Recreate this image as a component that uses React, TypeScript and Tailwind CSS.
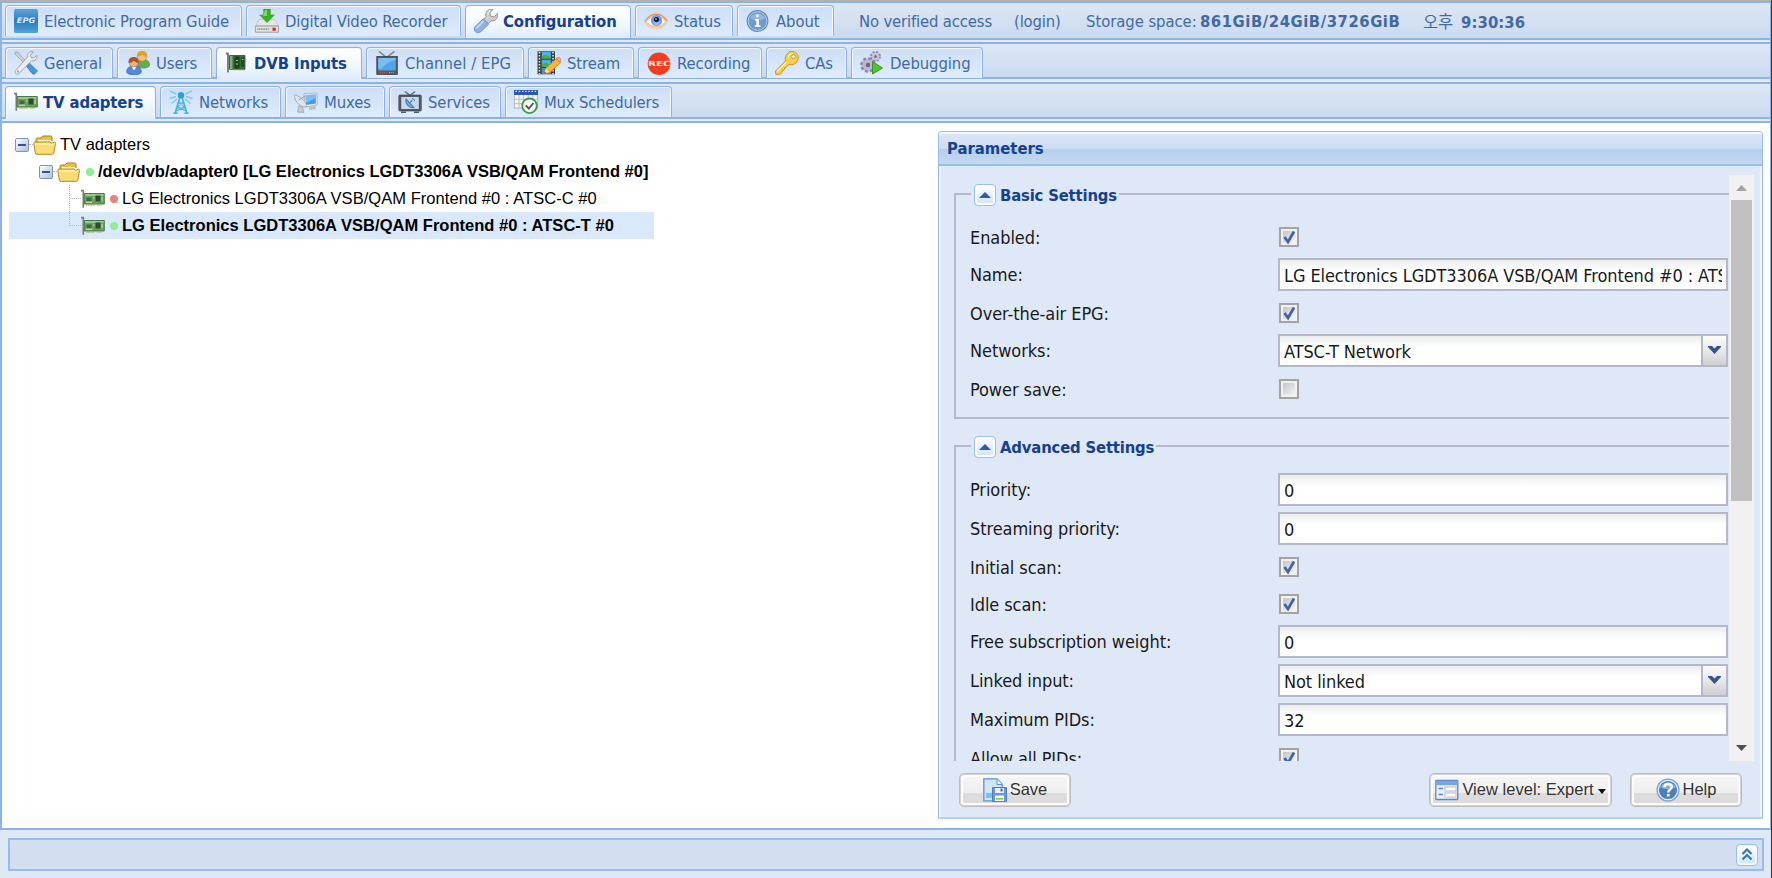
import type { ReactNode } from "react";

/* ---------- icons ---------- */

function Svg({ children, className = "size-6" }: { children: ReactNode; className?: string }) {
  return (
    <svg viewBox="0 0 24 24" className={`shrink-0 ${className}`} fill="none">
      {children}
    </svg>
  );
}

const EpgIcon = () => (
  <Svg>
    <defs>
      <linearGradient id="epg" x1="0" y1="0" x2="0" y2="1">
        <stop offset="0" stopColor="#5aa5da" />
        <stop offset="0.5" stopColor="#2b7cbf" />
        <stop offset="0.75" stopColor="#3a8cca" />
        <stop offset="1" stopColor="#5ba3d6" />
      </linearGradient>
    </defs>
    <rect width="24" height="24" rx="1.5" fill="url(#epg)" />
    <text x="12" y="13.6" textAnchor="middle" textLength="18.5" lengthAdjust="spacingAndGlyphs" fontFamily="DejaVu Sans, sans-serif" fontStyle="italic" fontWeight="700" fontSize="7.5" fill="#d9eaf8">
      EPG
    </text>
  </Svg>
);

const DvrIcon = () => (
  <Svg>
    <path d="M4 10.5h16l3.2 6.5H.8z" fill="#e6e6e6" stroke="#b4b4b4" strokeWidth=".6" />
    <path d="M.4 17h23.2v6.2H.4z" fill="#e2e2e2" stroke="#8d8d8d" strokeWidth=".8" />
    <path d="M2.5 20.2h12" stroke="#8b8b8b" strokeWidth="1.8" strokeDasharray="1 .7" />
    <rect x="17.5" y="18.7" width="3.2" height="3" fill="#f01818" />
    <path d="M8.700 0h6.600v6h4L12 13.600 4.700 6h4z" fill="#35b51c" stroke="#2a9a15" strokeWidth=".6" />
    <path d="M10 1h2v6H8z" fill="#7ddb5c" />
  </Svg>
);

const WrenchIcon = () => (
  <Svg>
    <path d="M23.700 4.200 20.200 8l-3.500-.9-.9-3.400L19.200.4c-3.500-1-6.800 1-7.400 4.300-.1 1.200 0 2 .3 2.800L9.800 9.900l4.500 4.600 2.800-2.700c4 .9 7.600-3 6.600-7.600z" fill="#cfcfcf" stroke="#8b8b8b" strokeWidth=".9" />
    <path d="M13.600 5.500c0-2 1-3.300 2.500-4" stroke="#f0f0f0" strokeWidth="1" />
    <path d="m9.200 10 5.300 5.300-7.500 7.200c-4 3.500-9-.8-5.700-5.200z" fill="#8fb0e4" stroke="#6a8fd0" strokeWidth=".9" />
    <path d="m9 12.500-6 6.200" stroke="#c0d4f3" strokeWidth="2" strokeLinecap="round" />
  </Svg>
);

const EyeIcon = () => (
  <Svg>
    <path d="M.3 12.500C3 5 9 3.200 12.500 3.200S22 6 23.700 12c-1.500 6-7 8.300-11.700 8.300S2 18 .3 12.500Z" fill="#f4cfae" />
    <path d="M.8 12.500C5 6.500 9 5.300 12.300 5.300S20 7.500 23.300 12" stroke="#d08c63" strokeWidth="1.100" />
    <path d="M2.500 12.800C6 8.300 9 7 12.300 7s6.500 1.800 9.300 5.200c-2.600 4-6 5.300-9.400 5.300-4 0-7.400-1.500-9.700-4.700Z" fill="#fff" stroke="#e0a983" strokeWidth=".6" />
    <circle cx="12.500" cy="11.500" r="5.600" fill="#6c9fe4" />
    <circle cx="12.500" cy="13.500" r="3" fill="#94bef2" />
    <circle cx="12.500" cy="10.600" r="2.600" fill="#14203c" />
    <circle cx="12" cy="10" r=".8" fill="#fff" />
  </Svg>
);

const InfoIcon = () => (
  <Svg>
    <circle cx="11.500" cy="12" r="10.900" fill="#5c86bd" />
    <circle cx="11.500" cy="12" r="9.400" fill="#6f9bcf" stroke="#b9d0ea" strokeWidth="1" />
    <path d="M4 9c3-6 12-6 15 0-4 3-11 3-15 0Z" fill="#93b6de" />
    <circle cx="11.500" cy="6.800" r="1.600" fill="#f2f7fd" />
    <path d="M9 10h4v6.300h1.500V18H8.800v-1.700h1.500v-4.600H9z" fill="#f2f7fd" />
  </Svg>
);

const ToolsIcon = () => (
  <Svg>
    <path d="m1 1.500 2.500-.8L7 5l7.500 8-1.800 1.700L5 6.800.8 3z" fill="#cfd3d6" stroke="#8e9499" strokeWidth=".7" />
    <path d="m12.500 15.200 3-3 8 7.800-3.300 3.300c-1 0-1.500-.3-2.200-1z" fill="#4c93d8" stroke="#2d6fb2" strokeWidth=".7" />
    <path d="M22.800 4.400 19.500 7l-2.300-.6-.6-2.300L19.300.8c-3.300-.9-6.500 1.700-5.800 5.100L1.500 19.500c-1.700 2.700 1.300 5 3.500 3L17.500 9.800c3.500.6 6.200-2.200 5.300-5.400Z" fill="#e9ecee" stroke="#8e9499" strokeWidth=".8" />
    <circle cx="4" cy="20.500" r="1" fill="#8e9499" />
  </Svg>
);

const UsersIcon = () => (
  <Svg>
    <path d="M11.500 13c0-3 2-4.500 5-4.500 4.500 0 7 2 7 5.500 0 2-3 3-6 3s-6-1-6-4Z" fill="#63ad4e" stroke="#3f8a2f" strokeWidth=".7" />
    <circle cx="16" cy="5.500" r="4.700" fill="#f2c084" stroke="#c98a33" strokeWidth=".6" />
    <path d="M11 5.500C10.500 1.500 13 0 16 0c3.500 0 5.700 2 5.200 5.800-2.500 0-3.500-1-5-2.300C15 5 13 5.500 11 5.500Z" fill="#e5a027" />
    <path d="M.7 20.500c0-3.500 3-5.500 7.300-5.500 4.500 0 7.300 2 7.300 5.500 0 2.300-3 3.200-7.300 3.200s-7.300-.9-7.300-3.200Z" fill="#5289dc" stroke="#2e63b7" strokeWidth=".7" />
    <path d="m5.500 15.500 2.500 4 2.500-4z" fill="#fff" />
    <circle cx="7.700" cy="11.500" r="4.600" fill="#eeb27c" stroke="#a9602a" strokeWidth=".5" />
    <path d="M2.700 12C2 8 4.500 6 7.700 6c3.500 0 5.600 2 5 6-2.500-.3-3.500-1-5-2.300-1.500 1.500-3 2.200-5 2.300Z" fill="#a6542a" />
  </Svg>
);

const DvbCardIcon = () => (
  <Svg>
    <path d="M3 2.500v19M.8 2.500h3" stroke="#77837a" strokeWidth="2" />
    <path d="M4.500 4.500H20v13.800H4.500z" fill="#35713a" stroke="#28512b" strokeWidth=".8" />
    <path d="M5 5h2.500v13H5z" fill="#86a886" />
    <rect x="9.500" y="5.500" width="5" height="12" fill="#1c4322" />
    <rect x="16" y="6.500" width="3" height="9" fill="#1f4a25" />
    <path d="M11 9.500h2M11 13h2M17 8.500h1.500" stroke="#a9cf8c" strokeWidth="1.200" />
    <path d="M8 19h11" stroke="#c5b35c" strokeWidth="1.200" strokeDasharray="1 .6" />
  </Svg>
);

const TvIcon = () => (
  <Svg>
    <path d="m4 .5 7.500 6L19.500.3" stroke="#7b868e" strokeWidth="1.500" />
    <rect x="1.800" y="5.500" width="20.500" height="18" fill="#555b61" stroke="#2f3439" strokeWidth=".7" />
    <rect x="3.300" y="7" width="17.500" height="12.500" fill="#4da6ec" />
    <path d="M3.300 7h17.500v2c-6 1-11 4-14 8.500H3.300z" fill="#78bff5" />
    <path d="M5 21.500h7" stroke="#d05050" strokeWidth="1.300" strokeDasharray="1.200 1" />
    <path d="M14 21.500h5" stroke="#a8afb4" strokeWidth="1.200" strokeDasharray="1.200 1" />
  </Svg>
);

const StreamIcon = () => (
  <Svg>
    <rect x=".5" y=".3" width="17.500" height="23" fill="#3a4042" />
    <path d="M2.500 1v22M16 1v22" stroke="#dfe5e7" strokeWidth="1.600" strokeDasharray="1.600 1.400" />
    <rect x="4.800" y="1" width="9" height="6.500" fill="#49b2ea" />
    <rect x="4.800" y="8.800" width="9" height="7" fill="#49b2ea" />
    <rect x="4.800" y="17" width="9" height="6" fill="#4a96c2" />
    <path d="M4.800 5.500 9 3.500l4.800 3v1h-9zM4.800 13.500 9 11.500l4.800 3v1.300h-9z" fill="#4fae3a" />
    <path d="M7 22.800 9 17 19.500 7.500l4 4.300L13 21.500z" fill="#f5b63d" stroke="#c17f17" strokeWidth=".8" />
    <path d="m19.500 7.500 1.300-1.100c1.500-.8 4.300 2 3 4l-.8.9z" fill="#f0a59b" stroke="#b9665c" strokeWidth=".6" />
    <path d="m7 22.800 2-5.300 3.500 3.600z" fill="#f6dcae" />
    <path d="m7 22.800.8-2 1.300 1.200z" fill="#333" />
  </Svg>
);

const RecIcon = () => (
  <Svg>
    <circle cx="12" cy="12.700" r="11.300" fill="#f23c20" />
    <text x="12.300" y="15.200" textAnchor="middle" textLength="22.500" lengthAdjust="spacingAndGlyphs" fontFamily="DejaVu Sans, sans-serif" fontWeight="700" fontSize="7" fill="#ffe9e4">
      REC
    </text>
  </Svg>
);

const KeyIcon = () => (
  <Svg>
    <path d="M11 5c1.500-3.500 4-5 7-4.500 4 .7 6 4.500 5 8-1 4-5 6-9 4.800L11 16.500l-1.500.3-.3 2.200-2 .3-.3 2.200-2 1.800-4 .2-.4-3.500L10.500 10C10 8 10.300 6.500 11 5Z" fill="#f8d04e" stroke="#c9921a" strokeWidth="1" />
    <path d="M2 20.500 11.500 11" stroke="#fdf0ac" strokeWidth="1.300" />
    <path d="M13 6c1-2.500 3-3.500 5-3" stroke="#fdf0ac" strokeWidth="1.400" />
    <circle cx="18.500" cy="5.500" r="2.100" fill="#deecfd" stroke="#c9921a" strokeWidth=".9" />
  </Svg>
);

const DebugIcon = () => (
  <Svg>
    <circle cx="15.500" cy="5.500" r="4.600" fill="#c6c3d8" stroke="#8f8ba8" strokeWidth="1.800" strokeDasharray="2.200 1.410" />
    <circle cx="15.500" cy="5.500" r="3.600" fill="#c6c3d8" />
    <circle cx="15.500" cy="5.500" r="1.500" fill="#78749a" />
    <circle cx="8" cy="14" r="6.600" fill="#bcb8d0" stroke="#8a86a3" strokeWidth="2.400" strokeDasharray="3 2.180" />
    <circle cx="8" cy="14" r="5.300" fill="#bcb8d0" />
    <circle cx="8" cy="14" r="2.300" fill="#6b6788" />
    <path d="M12.500 10.500 22.500 17l-10 6z" fill="#4fc42d" stroke="#2f8f17" strokeWidth=".9" />
  </Svg>
);

const AdapterIcon = () => (
  <Svg>
    <path d="M0 3.700h2.300v17" stroke="#7a827c" strokeWidth="1.700" />
    <path d="M3.300 6.500h20v10.500h-20z" fill="#69a262" stroke="#3c7440" strokeWidth=".9" />
    <path d="M4 7h18.500v2H4z" fill="#9cc48b" />
    <rect x="5.500" y="10.500" width="5" height="3.500" fill="#3c6b3f" />
    <rect x="14.500" y="8.500" width="5" height="6" fill="#2c4a2f" />
    <path d="M12 11h1.500M21 10v4M5 15.300h6" stroke="#d6e6b0" strokeWidth="1" />
    <path d="M5 18h9M16 18h5" stroke="#b7ab62" strokeWidth="1.700" strokeDasharray="1.200 .5" />
  </Svg>
);

const NetworksIcon = () => (
  <Svg>
    <g stroke="#45b3e8" strokeWidth="1.700">
      <path d="M11 7 6 23.500M13 7l5 16.500" />
      <path d="m9.500 12 6 5-8.500 4M14.500 12l-6 5 8.500 4M9 13h6M8 18h8" strokeWidth="1.200" />
      <path d="M4.500 23.200h4M15.500 23.200h4" strokeWidth="1.800" />
    </g>
    <circle cx="12" cy="5.300" r="3.200" fill="#2fa0dc" />
    <g stroke="#7bcbf1" strokeWidth="1.500">
      <path d="M7.500 4 1 1M7 6.500.5 8.500M8 9l-5.500 4.500M16.500 4 23 1M17 6.500l6.500 2M16 9l5.500 4.500" />
    </g>
  </Svg>
);

const MuxesIcon = () => (
  <Svg>
    <path d="M10 3.500 23 3v12l-12 2z" fill="#e9edf1" stroke="#a4adb5" strokeWidth=".8" />
    <path d="M11.500 5 21.800 4.500v9L12 15z" fill="#3f9ae9" />
    <path d="M12 5h9.800v3L12 13z" fill="#7bbdf4" />
    <path d="m15 17 6-1 1 3-7 1z" fill="#b7bfc6" />
    <path d="M.5 5c1.500-1.500 13 7 12 11.500C8 18.500 0 12 .5 5Z" fill="#e3e6e9" stroke="#9aa1a8" strokeWidth=".8" />
    <path d="m5 10 6-4" stroke="#8f979e" strokeWidth="1" />
    <path d="M5 15.500 3.500 22l6.500.5-1.500-5.500z" fill="#c7ccd1" stroke="#9aa1a8" strokeWidth=".7" />
  </Svg>
);

const ServicesIcon = () => (
  <Svg>
    <path d="m7 1.500 5 4 5-4" stroke="#5e6a74" strokeWidth="1.500" />
    <rect x=".8" y="5" width="22.500" height="16" rx="1" fill="#515b64" stroke="#363e45" strokeWidth=".6" />
    <rect x="3.300" y="7" width="17.500" height="12" fill="#c9d9ea" />
    <path d="M8 9c-1 4.500 2.500 8.800 8 8.800zM11 13.500l3.500-3.500" stroke="#4b7fc4" fill="#7fa9df" strokeWidth="1.100" />
    <path d="M14 8.500c1.500 0 2.500 1 2.500 2.500" stroke="#4b7fc4" strokeWidth="1" />
    <path d="M3 22.300h5M16 22.300h5" stroke="#515b64" strokeWidth="1.600" />
  </Svg>
);

const SchedIcon = () => (
  <Svg>
    <rect x=".5" y=".5" width="23" height="17.500" fill="#f4f6f8" stroke="#a6adb5" strokeWidth=".8" />
    <path d="M0 0h24v5H0z" fill="#2a56b5" />
    <path d="M1.500 1.300h21" stroke="#e6eefb" strokeWidth="1.200" strokeDasharray="1.500 1.700" />
    <path d="M.5 9.300h23M.5 13.700h23M5 5v13M9.600 5v13M14.200 5v13M18.800 5v13" stroke="#b2b8bf" strokeWidth=".9" />
    <circle cx="15.500" cy="15.800" r="7.300" fill="#f7faf7" stroke="#3f9a48" strokeWidth="1.800" />
    <path d="m11.800 15.300 3 3.300 4.700-5.600" stroke="#4d5358" strokeWidth="1.800" />
  </Svg>
);

const FolderIcon = () => (
  <Svg>
    <path d="M3 20V6.500c0-1 .5-1.500 1.500-1.500H8l2-2h7.500c1 0 1.500.5 1.500 1.500V8" fill="#e9c04a" stroke="#a8801d" strokeWidth="1" />
    <path d="M5 7h13v6H5z" fill="#fff6c9" />
    <path d="M.8 10.500C.8 9.500 1.300 9 2 9h15.500l1 1.500 3-1.500c.8 0 1.200.5 1 1.500L20.800 20c-.2 1-.7 1.300-1.600 1.300H4c-1 0-1.500-.5-1.700-1.300z" fill="#f9dc74" stroke="#b48a21" strokeWidth="1" />
    <path d="M2.300 11h15l1 1.200 3-1.500" stroke="#fdf0b0" strokeWidth="1.400" />
  </Svg>
);

const SaveIcon = () => (
  <Svg>
    <path d="M.8.8h13.400l5 5.500v16.500H.8z" fill="#cfe5fa" stroke="#5c95d8" strokeWidth="1.300" />
    <path d="M3 15h10v5H3z" fill="#7cc0f5" />
    <path d="M14 1v5.500h5" fill="#eff7fe" stroke="#5c95d8" strokeWidth="1" />
    <path d="M9.500 9.500h14v14.200h-14z" fill="#6d97d9" stroke="#4f7cc4" strokeWidth="1" />
    <rect x="12" y="10" width="9" height="5" fill="#eaf1fb" />
    <rect x="17.500" y="10.500" width="2" height="3" fill="#3f6fba" />
    <rect x="12" y="17.500" width="9" height="5.500" fill="#fff" />
    <path d="M13 20.800h7" stroke="#80d24a" strokeWidth="1.800" />
  </Svg>
);

const ViewIcon = () => (
  <Svg>
    <rect x=".8" y="2.300" width="22" height="19.200" rx=".8" fill="#e9eff9" stroke="#5d88c9" strokeWidth="1.300" />
    <path d="M1.300 2.800h21v4.400h-21z" fill="#79a5df" />
    <path d="M3.500 10.500h4.500M3.500 16.500h4.500" stroke="#5d88c9" strokeWidth="1.300" />
    <rect x="10" y="9" width="11" height="4" fill="#fff" stroke="#b3b9c2" strokeWidth=".9" />
    <rect x="10" y="15" width="11" height="4" fill="#fff" stroke="#b3b9c2" strokeWidth=".9" />
  </Svg>
);

const HelpIcon = () => (
  <Svg>
    <circle cx="12" cy="12" r="11.600" fill="#7fa4d3" />
    <circle cx="12" cy="12" r="9.700" fill="#4d7ebd" stroke="#e6effa" strokeWidth="1.200" />
    <path d="M4 9c3-6 13-6 16 0-4 3-12 3-16 0Z" fill="#86aedb" />
    <path d="M8.500 9.200c.2-4.500 7.500-4 7.200-.2C15.500 11.500 12.300 11.800 12.200 14.500" stroke="#fff" strokeWidth="2.400" />
    <rect x="10.900" y="16" width="2.700" height="2.500" fill="#fff" />
  </Svg>
);

/* ---------- tabs ---------- */

type Tab = { label: string; icon: ReactNode; width: string; tracking?: string; active?: boolean };

const mainTabs: Tab[] = [
  { label: "Electronic Program Guide", icon: <EpgIcon />, width: "w-[237px]", tracking: "tracking-[-0.16px]" },
  { label: "Digital Video Recorder", icon: <DvrIcon />, width: "w-[215px]", tracking: "tracking-[-0.14px]" },
  { label: "Configuration", icon: <WrenchIcon />, width: "w-[166px]", active: true },
  { label: "Status", icon: <EyeIcon />, width: "w-[98px]" },
  { label: "About", icon: <InfoIcon />, width: "w-[97px]" },
];

const configTabs: Tab[] = [
  { label: "General", icon: <ToolsIcon />, width: "w-[108px]" },
  { label: "Users", icon: <UsersIcon />, width: "w-[95px]" },
  { label: "DVB Inputs", icon: <DvbCardIcon />, width: "w-[146px]", active: true },
  { label: "Channel / EPG", icon: <TvIcon />, width: "w-[158px]", tracking: "tracking-[0.06px]" },
  { label: "Stream", icon: <StreamIcon />, width: "w-[106px]" },
  { label: "Recording", icon: <RecIcon />, width: "w-[124px]" },
  { label: "CAs", icon: <KeyIcon />, width: "w-[81px]" },
  { label: "Debugging", icon: <DebugIcon />, width: "w-[132px]" },
];

const dvbTabs: Tab[] = [
  { label: "TV adapters", icon: <AdapterIcon />, width: "w-[151px]", tracking: "tracking-[-0.1px]", active: true },
  { label: "Networks", icon: <NetworksIcon />, width: "w-[121px]" },
  { label: "Muxes", icon: <MuxesIcon />, width: "w-[100px]" },
  { label: "Services", icon: <ServicesIcon />, width: "w-[112px]" },
  { label: "Mux Schedulers", icon: <SchedIcon />, width: "w-[167px]", tracking: "tracking-[-0.2px]" },
];

function TabItem({ tab, idleHeight, activeHeight }: { tab: Tab; idleHeight: string; activeHeight: string }) {
  const look = tab.active
    ? `z-10 gap-[5px] bg-linear-to-b from-white via-[#f5f9fe] to-[#deecfd] font-bold text-[#15428b] ${activeHeight}`
    : `gap-[6px] bg-linear-to-b from-[#cddef5] to-[#deecfd] text-[#416aa3] ${idleHeight}`;
  return (
    <div
      className={`relative flex shrink-0 items-start rounded-t-[4px] border border-b-0 border-[#8db2e3] pt-[3px] pl-2 shadow-[inset_1px_1px_0_#f2f7fe,inset_-1px_0_0_#f2f7fe] ${tab.width} ${look}`}
    >
      {tab.icon}
      <span className={`leading-[25px] whitespace-nowrap ${tab.tracking ?? "tracking-[-0.08px]"}`}>{tab.label}</span>
    </div>
  );
}

function TabStrip({
  tabs,
  className,
  idleHeight,
  activeHeight,
  children,
}: {
  tabs: Tab[];
  className: string;
  idleHeight: string;
  activeHeight: string;
  children?: ReactNode;
}) {
  return (
    <div className={`flex shrink-0 items-start gap-1 bg-linear-to-b from-[#dde8f5] to-[#cbdaf0] pl-[3px] ${className}`}>
      {tabs.map((t) => (
        <TabItem key={t.label} tab={t} idleHeight={idleHeight} activeHeight={activeHeight} />
      ))}
      {children}
    </div>
  );
}

const Rule = () => <div className="h-0.5 shrink-0 bg-[#8db2e3]" />;

/* ---------- tree ---------- */

function Collapse() {
  return (
    <div className="flex size-[14px] shrink-0 items-center justify-center rounded-[2px] border border-[#8296b4] bg-linear-to-br from-white to-[#a9bedd]">
      <div className="h-[2px] w-2 bg-[#36558c]" />
    </div>
  );
}

function Dot({ color }: { color: string }) {
  return <div className={`size-2 shrink-0 rounded-full ${color}`} />;
}

function Tree() {
  return (
    <div className="flex w-[645px] flex-col pt-[8px] pl-0 text-[16.5px] leading-[27px] text-black">
      <div className="flex h-[27px] items-center pl-[6px]">
        <Collapse />
        <div className="w-[4px] border-t border-dotted border-[#b8b8b8]" />
        <FolderIcon />
        <span className="ml-[3px] whitespace-nowrap">TV adapters</span>
      </div>
      <div className="flex h-[27px] items-center pl-[30px]">
        <Collapse />
        <div className="w-[4px] border-t border-dotted border-[#b8b8b8]" />
        <FolderIcon />
        <div className="w-[5px]" />
        <Dot color="bg-[#90ee90]" />
        <span className="ml-[4px] font-bold whitespace-nowrap">/dev/dvb/adapter0 [LG Electronics LGDT3306A VSB/QAM Frontend #0]</span>
      </div>
      <div className="flex h-[27px] items-center pl-[60px]">
        <div className="h-full w-px border-l border-dotted border-[#b8b8b8]" />
        <div className="w-[11px] border-t border-dotted border-[#b8b8b8]" />
        <AdapterIcon />
        <div className="w-[5px]" />
        <Dot color="bg-[#f08080]" />
        <span className="ml-[4px] tracking-[0.05px] whitespace-nowrap">LG Electronics LGDT3306A VSB/QAM Frontend #0 : ATSC-C #0</span>
      </div>
      <div className="flex h-[27px] items-center bg-[#d9e8fb] pl-[60px]">
        <div className="h-[14px] w-px self-start border-l border-dotted border-[#b8b8b8]" />
        <div className="w-[11px] border-t border-dotted border-[#b8b8b8]" />
        <AdapterIcon />
        <div className="w-[5px]" />
        <Dot color="bg-[#90ee90]" />
        <span className="ml-[4px] tracking-[0.02px] font-bold whitespace-nowrap">LG Electronics LGDT3306A VSB/QAM Frontend #0 : ATSC-T #0</span>
      </div>
    </div>
  );
}

/* ---------- form ---------- */

type Field = { label: string; kind: "check" | "text" | "select"; value?: string; checked?: boolean };

const basic: Field[] = [
  { label: "Enabled:", kind: "check", checked: true },
  { label: "Name:", kind: "text", value: "LG Electronics LGDT3306A VSB/QAM Frontend #0 : ATSC-T #0" },
  { label: "Over-the-air EPG:", kind: "check", checked: true },
  { label: "Networks:", kind: "select", value: "ATSC-T Network" },
  { label: "Power save:", kind: "check" },
];

const advanced: Field[] = [
  { label: "Priority:", kind: "text", value: "0" },
  { label: "Streaming priority:", kind: "text", value: "0" },
  { label: "Initial scan:", kind: "check", checked: true },
  { label: "Idle scan:", kind: "check", checked: true },
  { label: "Free subscription weight:", kind: "text", value: "0" },
  { label: "Linked input:", kind: "select", value: "Not linked" },
  { label: "Maximum PIDs:", kind: "text", value: "32" },
  { label: "Allow all PIDs:", kind: "check", checked: true },
];

function Check({ checked }: { checked?: boolean }) {
  return (
    <div className="mt-1.5 ml-px flex size-5 items-center justify-center border-2 border-[#a3a3a3] bg-[#f1f1f1]">
      <div className="flex size-3 items-center justify-center bg-linear-to-br from-[#c0c4cc] to-[#f6f6f6]">
        {checked && (
          <svg viewBox="0 0 12 12" className="size-3 shrink-0 overflow-visible" fill="none">
            <path d="m1.500 6 3.500 5L11 .5" stroke="#4560a4" strokeWidth="2.700" />
          </svg>
        )}
      </div>
    </div>
  );
}

function FieldRow({ field }: { field: Field }) {
  return (
    <div className={`flex items-start ${field.kind === "check" ? "h-[37px]" : "h-[39px]"}`}>
      <div className="w-[308px] shrink-0 pt-[5px] leading-6 tracking-[-0.08px] whitespace-nowrap">{field.label}</div>
      {field.kind === "check" ? (
        <Check checked={field.checked} />
      ) : (
        <div className="flex h-[33px] min-w-0 flex-1 border-2 border-[#b5b8c8] bg-white bg-linear-to-b from-[#eceeee] to-white to-40%">
          <div className="min-w-0 flex-1 px-1">
            <div className="overflow-hidden pt-px leading-[29px] tracking-[-0.09px] whitespace-nowrap">{field.value}</div>
          </div>
          {field.kind === "select" && (
            <div className="flex w-[25px] justify-center border-l-2 border-[#b5b8c8] bg-linear-to-b from-[#fbfbfb] via-[#e9e9ec] via-50% to-[#cfcfd3] pt-[10px]">
              <svg viewBox="0 0 13 8" className="h-2 w-[13px]">
                <path d="M0 0h4l2.500 2.500L9 0h4v1L6.500 8 0 1z" fill="#35548f" />
              </svg>
            </div>
          )}
        </div>
      )}
    </div>
  );
}

function Section({ title, fields, className = "" }: { title: string; fields: Field[]; className?: string }) {
  return (
    <fieldset className={`min-w-0 border-2 border-r-0 border-[#b5b8c8] pt-[17px] pr-px pb-[7px] pl-[14px] ${className}`}>
      <legend className="ml-px flex h-5 items-start px-[3px] pr-[2px]">
        <div className="flex size-[22px] shrink-0 items-center justify-center rounded-[4px] border border-[#99c0ee] bg-linear-to-b from-white to-[#cfe3fb] shadow-[inset_0_0_0_2px_#fff]">
          <svg viewBox="0 0 12 6" className="h-1.5 w-3">
            <path d="M0 6 6 0l6 6z" fill="#3459b0" />
          </svg>
        </div>
        <span className="ml-1 text-[16.5px] leading-6 font-bold tracking-[-0.17px] whitespace-nowrap text-[#15428b]">{title}</span>
      </legend>
      {fields.map((f) => (
        <FieldRow key={f.label} field={f} />
      ))}
    </fieldset>
  );
}

function Scrollbar() {
  return (
    <div className="flex w-[25px] shrink-0 flex-col items-center bg-[#f1f1f1]">
      <div className="h-[25px] pt-2.5">
        <svg viewBox="0 0 11 6" className="h-1.5 w-[11px]">
          <path d="M0 6 5.500 0 11 6z" fill="#a3a3a3" />
        </svg>
      </div>
      <div className="h-[301px] w-[21px] bg-[#c1c1c1]" />
      <div className="flex-1" />
      <div className="h-4">
        <svg viewBox="0 0 11 6" className="h-1.5 w-[11px]">
          <path d="M0 0h11L5.500 6z" fill="#505050" />
        </svg>
      </div>
    </div>
  );
}

function Button({ width, children }: { width: string; children: ReactNode }) {
  return (
    <button
      className={`flex h-[34px] shrink-0 items-center justify-center gap-[3px] rounded-[5px] border border-[#bdbdbd] bg-linear-to-b from-[#f6f6f6] from-0% via-[#efefef] via-58% to-[#dcdcdc] to-[60%] pb-px font-['Liberation_Sans',Arial,sans-serif] text-[16.5px] whitespace-nowrap text-[#333] shadow-[inset_0_0_0_1px_#d2d2d2,inset_0_0_0_3px_#fbfbfb] ${width}`}
    >
      {children}
    </button>
  );
}

function Parameters() {
  return (
    <div className="mt-2 flex h-[688px] w-[825px] shrink-0 flex-col rounded-t-[4px] border border-b-2 border-[#99bce8] border-b-[#b8d1f2] bg-[#dfe8f6] shadow-[inset_2px_0_0_#eff5fc,inset_-2px_0_0_#eff5fc]">
      <div className="h-[34px] shrink-0 rounded-t-[3px] border-b-2 border-[#99bce8] bg-linear-to-b from-[#dce8f6] from-0% via-[#cbddf2] via-[53%] to-[#cbddf2] to-[53%] shadow-[inset_0_2px_0_#f0f6fd]">
        <div className="h-full bg-linear-to-b from-transparent from-[53%] via-[#b3cfed] via-[53%] to-[#c5d8f1] pl-2 text-[16.5px] leading-[34px] font-bold text-[#15428b]">
          Parameters
        </div>
      </div>
      <div className="flex h-[595px] shrink-0 pt-[9px] pr-2 pl-[15px]">
        <div className="min-w-0 flex-1 overflow-hidden pt-[9px] text-[18px] text-[#1a1a1a]">
          <Section title="Basic Settings" fields={basic} />
          <Section title="Advanced Settings" fields={advanced} className="mt-[17px]" />
        </div>
        <Scrollbar />
      </div>
      <div className="flex pt-3 pr-[20px] pl-5">
        <Button width="w-[112px]">
          <SaveIcon />
          <span>Save</span>
        </Button>
        <div className="flex-1" />
        <Button width="w-[183px]">
          <ViewIcon />
          <span className="mr-px tracking-[0.02px]">View level: Expert</span>
          <svg viewBox="0 0 8 5" className="mt-1 h-[5px] w-2">
            <path d="M0 0h8L4 5z" fill="#111" />
          </svg>
        </Button>
        <div className="w-[18px]" />
        <Button width="w-[112px]">
          <HelpIcon />
          <span>Help</span>
        </Button>
      </div>
    </div>
  );
}

/* ---------- page ---------- */

export default function App() {
  return (
    <div className="flex h-[878px] w-[1772px] flex-col overflow-hidden border-r border-[#2b3346] bg-[#dfe8f6] font-['DejaVu_Sans_Condensed','DejaVu_Sans','Noto_Sans_CJK_KR',sans-serif] text-[16.5px] font-stretch-condensed">
      <div className="h-px shrink-0 bg-[#b3b3b3]" />
      <Rule />
      <div className="flex h-[827px] shrink-0 flex-col border-r border-b-2 border-l-2 border-[#8db2e3]">
        <TabStrip tabs={mainTabs} className="h-[35px] pt-[2px]" idleHeight="h-[31px]" activeHeight="h-[33px]">
          <div className="flex pt-1 pl-[21px] leading-[25px] tracking-[-0.15px] whitespace-nowrap text-[#416aa3]">
            <span className="w-[155px]">No verified access</span>
            <span className="w-[72px]">(login)</span>
            <span className="w-[114px] tracking-[-0.05px]">Storage space:</span>
            <b className="w-[223px] tracking-[0.54px]">861GiB/24GiB/3726GiB</b>
            <span className="w-[38px] pt-px font-['Noto_Sans_CJK_KR',sans-serif] leading-[22px]">오후</span>
            <b className="pt-px tracking-[0.1px]">9:30:36</b>
          </div>
        </TabStrip>
        <Rule />
        <div className="h-0.5 shrink-0 bg-[#deecfd]" />
        <Rule />
        <TabStrip tabs={configTabs} className="h-[33px] pt-[3px]" idleHeight="h-[31px]" activeHeight="h-[32px]" />
        <Rule />
        <div className="h-[3px] shrink-0 bg-[#deecfd]" />
        <Rule />
        <TabStrip tabs={dvbTabs} className="h-[33px] pt-[2px]" idleHeight="h-[31px]" activeHeight="h-[33px]" />
        <Rule />
        <div className="h-0.5 shrink-0 bg-[#deecfd]" />
        <Rule />
        <div className="flex flex-1 justify-between bg-white pr-[7px] pl-[7px]">
          <div className="font-['Liberation_Sans',Arial,sans-serif] font-stretch-normal">
            <Tree />
          </div>
          <Parameters />
        </div>
      </div>
      <div className="mt-2 mr-[7px] ml-2 flex h-[33px] shrink-0 items-center justify-end border-2 border-[#99bbf0] bg-[#d3dff0] pr-1">
        <div className="flex size-[22px] items-center justify-center rounded-[4px] border border-[#99c0ee] bg-linear-to-b from-white to-[#cfe3fb] shadow-[inset_0_0_0_2px_#f4f9ff]">
          <svg viewBox="0 0 12 13" className="h-[13px] w-3" fill="none">
            <path d="m1.500 6 4.500-4.500L10.500 6M1.500 11.500 6 7l4.500 4.500" stroke="#3f74b5" strokeWidth="2.200" />
          </svg>
        </div>
      </div>
    </div>
  );
}
